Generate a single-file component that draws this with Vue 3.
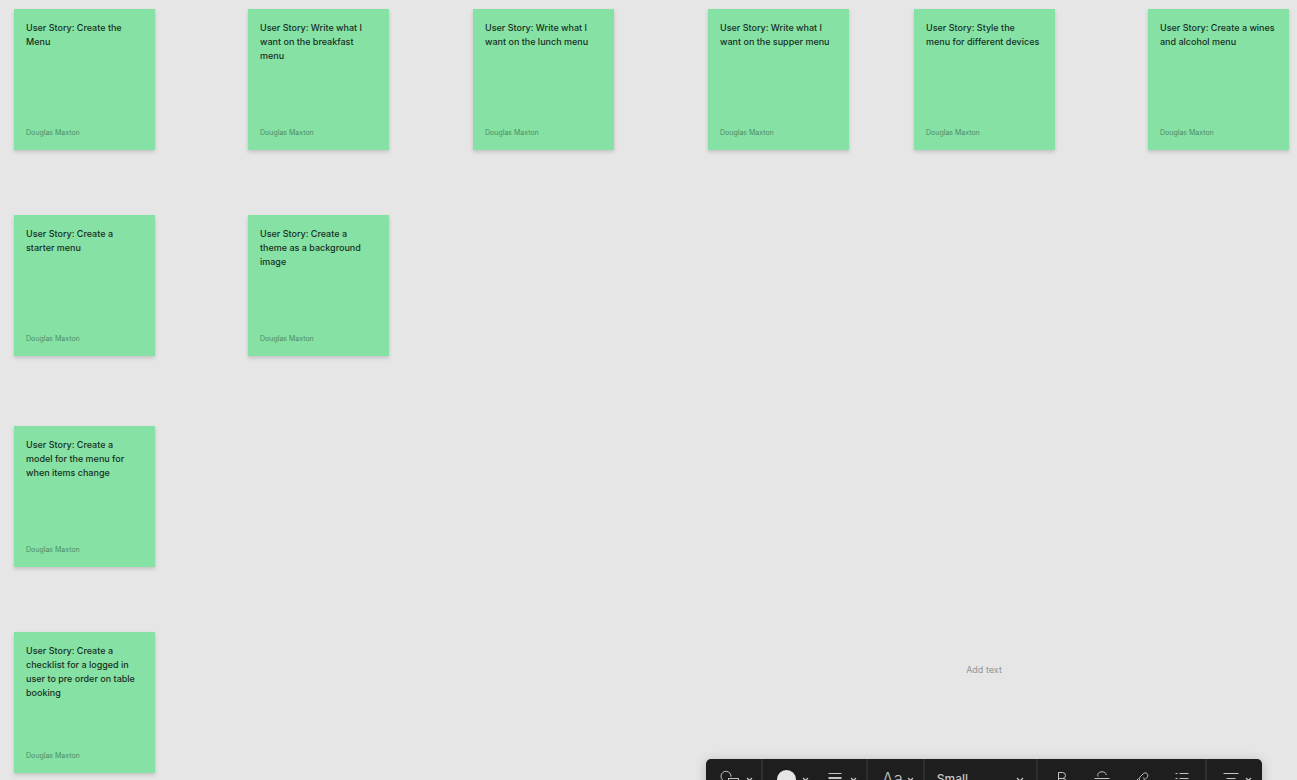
<script setup>
import { ref } from 'vue'

const author = 'Douglas Maxton'
const size = ref('Small')
const label = ref('')

const notes = [
  { x: 14, y: 9, text: 'User Story: Create the\nMenu' },
  { x: 248, y: 9, text: 'User Story: Write what I\nwant on the breakfast\nmenu' },
  { x: 473, y: 9, text: 'User Story: Write what I\nwant on the lunch menu' },
  { x: 708, y: 9, text: 'User Story: Write what I\nwant on the supper menu' },
  { x: 914, y: 9, text: 'User Story: Style the\nmenu for different devices' },
  { x: 1148, y: 9, text: 'User Story: Create a wines\nand alcohol menu' },
  { x: 14, y: 215, text: 'User Story: Create a\nstarter menu' },
  { x: 248, y: 215, text: 'User Story: Create a\ntheme as a background\nimage' },
  { x: 14, y: 426, text: 'User Story: Create a\nmodel for the menu for\nwhen items change' },
  { x: 14, y: 632, text: 'User Story: Create a\nchecklist for a logged in\nuser to pre order on table\nbooking' },
]
</script>

<template>
  <main class="board">
    <article
      v-for="note in notes"
      :key="note.text"
      class="note"
      :style="{ left: note.x + 'px', top: note.y + 'px' }"
    >
      <p class="story">{{ note.text }}</p>
      <p class="author">{{ author }}</p>
    </article>

    <input v-model="label" class="label" type="text" placeholder="Add text" aria-label="Shape text" />

    <div class="toolbar" role="toolbar" aria-label="Text formatting">
      <div class="group shape">
        <button type="button" class="tool" aria-label="Shape">
          <svg width="20" height="18" viewBox="0 0 20 18">
            <path d="M5 11.2A5 5 0 1 1 11 6.8" />
            <rect x="8.5" y="8.5" width="10" height="7" />
          </svg>
          <svg class="chevron" width="7" height="5" viewBox="0 0 7 5"><path d="M1 1l2.500 2.500L6 1" /></svg>
        </button>
      </div>
      <div class="group styles">
        <button type="button" class="tool" aria-label="Colour">
          <span class="swatch"></span>
          <svg class="chevron" width="7" height="5" viewBox="0 0 7 5"><path d="M1 1l2.500 2.500L6 1" /></svg>
        </button>
        <button type="button" class="tool lines" aria-label="Line style">
          <svg width="14" height="14" viewBox="0 0 14 14">
            <path d="M.5 1.500h13" />
            <path d="M.5 6h13" stroke-width="2" />
            <path d="M.5 11.500h13" stroke-width="3" />
          </svg>
          <svg class="chevron" width="7" height="5" viewBox="0 0 7 5"><path d="M1 1l2.500 2.500L6 1" /></svg>
        </button>
      </div>
      <div class="group font">
        <button type="button" class="tool" aria-label="Font">
          <span class="glyphs">Aa</span>
          <svg class="chevron" width="7" height="5" viewBox="0 0 7 5"><path d="M1 1l2.500 2.500L6 1" /></svg>
        </button>
      </div>
      <div class="group size">
        <select v-model="size" aria-label="Text size">
          <option>Small</option>
          <option>Medium</option>
          <option>Large</option>
        </select>
        <svg class="chevron" width="8" height="5" viewBox="0 0 8 5"><path d="M1 1l3 3 3-3" /></svg>
      </div>
      <div class="group marks">
        <button type="button" class="tool" aria-label="Bold">
          <svg width="16" height="16" viewBox="0 0 16 16">
            <path d="M4.500 1.500v13h4.500a3.500 3.500 0 0 0 0-7H4.500h4a3 3 0 0 0 0-6z" />
          </svg>
        </button>
        <button type="button" class="tool" aria-label="Strikethrough">
          <svg width="16" height="16" viewBox="0 0 16 16">
            <path d="M.5 7.500h15M4 5.500C3 2.500 5 .8 8 .8c2.500 0 4 1.200 4.300 3.200M3.700 11c.3 2.500 2 3.700 4.300 3.700 3 0 5-1.700 4.200-4.700" />
          </svg>
        </button>
        <button type="button" class="tool" aria-label="Link">
          <svg width="16" height="16" viewBox="0 0 16 16">
            <path d="M6 9.500c-1-1.200-.8-2.700.2-3.700l3-3c2.600-2.600 6.200.8 3.900 3.600L11 8.500M9.500 6.500c1 1.200.8 2.700-.2 3.700l-3 3c-2.600 2.600-6.200-.8-3.900-3.600L4.500 7.500" />
          </svg>
        </button>
        <button type="button" class="tool" aria-label="Bulleted list">
          <svg width="16" height="16" viewBox="0 0 16 16">
            <path d="M1.500 2.500h2M5.500 2.500h9M1.500 7.500h2M5.500 7.500h9M1.500 12.500h2M5.500 12.500h9" />
          </svg>
        </button>
      </div>
      <div class="group align">
        <button type="button" class="tool" aria-label="Alignment">
          <svg width="16" height="16" viewBox="0 0 16 16">
            <path d="M.5 2.500h15M3.500 7.500h9M.5 12.500h15" />
          </svg>
          <svg class="chevron" width="7" height="5" viewBox="0 0 7 5"><path d="M1 1l2.500 2.500L6 1" /></svg>
        </button>
      </div>
    </div>
  </main>
</template>

<style>
body {
  margin: 0;
  background: #e6e6e6;
}
</style>

<style scoped>
.board {
  position: relative;
  height: 100vh;
  overflow: hidden;
  background: #e6e6e6;
  font-family: Inter, "Liberation Sans", sans-serif;
}

.note {
  position: absolute;
  box-sizing: border-box;
  display: flex;
  flex-direction: column;
  justify-content: space-between;
  width: 141px;
  height: 141px;
  padding: 12px 8px 12px 12px;
  background: #86e1a4;
  box-shadow: 0 2px 4px rgba(0, 0, 0, 0.16);
}

.story,
.author {
  margin: 0;
}

.story {
  color: #17301f;
  font-size: 9px;
  font-weight: 500;
  line-height: 14px;
  white-space: pre-line;
}

.author {
  color: #4f8c63;
  font-size: 7px;
  line-height: 10px;
}

.label {
  position: absolute;
  top: 662px;
  left: 934px;
  width: 100px;
  height: 16px;
  padding: 0;
  border: 0;
  outline: 0;
  background: transparent;
  color: #333;
  font: 9px/16px Inter, "Liberation Sans", sans-serif;
  text-align: center;
}

.label::placeholder {
  color: #959595;
}

.toolbar {
  position: absolute;
  top: 759px;
  left: 706px;
  display: flex;
  height: 40px;
  border-radius: 5px;
  background: #1e1e1e;
  box-shadow: 0 2px 12px rgba(0, 0, 0, 0.2);
  color: #c4c4c4;
}

.group {
  display: flex;
  align-items: center;
  padding: 0 9px 0 14px;
  border-right: 2px solid #2e2e2e;
}

.group:last-child {
  border-right: 0;
}

.shape {
  padding-right: 8px;
}

.tool {
  display: flex;
  align-items: center;
  gap: 6px;
  padding: 0;
  border: 0;
  background: none;
  color: inherit;
  font: inherit;
}

svg {
  display: block;
  flex: none;
  fill: none;
  stroke: currentColor;
}

.chevron {
  stroke-width: 1.3;
}

.swatch {
  width: 19px;
  height: 19px;
  border-radius: 50%;
  background: #e6e6e6;
}

.styles {
  gap: 19px;
}

.lines {
  gap: 8px;
}

.font .tool {
  gap: 4px;
}

.glyphs {
  font-size: 17px;
  font-weight: 300;
  line-height: 20px;
}

.size select {
  width: 79px;
  height: 24px;
  padding: 0;
  border: 0;
  appearance: none;
  background: transparent;
  color: inherit;
  font: 500 12px/24px Inter, "Liberation Sans", sans-serif;
}

.size {
  padding: 0 12px;
}

.marks {
  gap: 24px;
  padding: 0 15px 0 16px;
}

.align {
  padding: 0 10px 0 16px;
}
</style>
